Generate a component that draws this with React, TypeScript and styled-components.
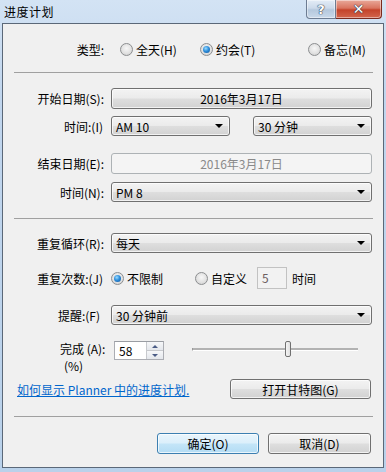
import React from 'react';
import styled, { createGlobalStyle } from 'styled-components';

const GlobalStyle = createGlobalStyle`
  html, body {
    margin: 0;
    padding: 0;
    background: #ffffff;
  }
  body {
    font-family: "Noto Sans CJK SC", "Liberation Sans", sans-serif;
    font-size: 12px;
    color: #000;
  }
`;

const Window = styled.div`
  width: 386px;
  height: 472px;
  display: flex;
  flex-direction: column;
  background: linear-gradient(180deg, #d3e3f4 0%, #c1d6ee 20%, #b9d1ea 100%);
`;

const TitleBar = styled.div`
  height: 23px;
  flex-shrink: 0;
  display: flex;
  align-items: flex-start;
  padding-left: 4px;
`;

const Title = styled.div`
  line-height: 23px;
  font-size: 12px;
  letter-spacing: 0.5px;
`;

const CaptionButtons = styled.div`
  margin-left: auto;
  margin-right: 4px;
  display: flex;
`;

const CaptionButton = styled.div<{ $variant: 'help' | 'close' }>`
  width: ${({ $variant }) => ($variant === 'help' ? '28px' : '45px')};
  height: 18px;
  display: flex;
  align-items: center;
  justify-content: center;
  border: 1px solid ${({ $variant }) => ($variant === 'help' ? '#6d7c92' : '#7a2a1e')};
  border-top: none;
  border-left: ${({ $variant }) => ($variant === 'help' ? '1px solid #6d7c92' : 'none')};
  border-radius: ${({ $variant }) => ($variant === 'help' ? '0 0 0 4px' : '0 0 4px 0')};
  background: ${({ $variant }) =>
    $variant === 'help'
      ? 'linear-gradient(180deg, #e3ecf6 0%, #ccdaea 45%, #b5c8dd 55%, #c9d9ea 100%)'
      : 'linear-gradient(180deg, #e9a99a 0%, #d9745f 45%, #c4432a 55%, #d2664d 100%)'};
  box-shadow: inset 0 0 0 1px rgba(255, 255, 255, 0.45);
  font-family: "DejaVu Sans", sans-serif;
  font-weight: bold;
  font-size: ${({ $variant }) => ($variant === 'help' ? '13px' : '14px')};
  color: #ffffff;
  text-shadow: 0 0 1px #2c3a4e, 0 0 1px #2c3a4e, 0 0 1px #2c3a4e;
`;

const Body = styled.div`
  flex: 1;
  margin: 0 2px 4px 2px;
  border: 1px solid #5b6878;
  background: #f0f0f0;
  display: flex;
  flex-direction: column;
`;

const Row = styled.div<{ $top: number; $h: number }>`
  display: flex;
  align-items: center;
  margin-top: ${({ $top }) => $top}px;
  height: ${({ $h }) => $h}px;
  padding-right: 11px;
  flex-shrink: 0;
`;

const Label = styled.div<{ $inset?: number }>`
  width: 101px;
  flex-shrink: 0;
  text-align: right;
  padding-right: ${({ $inset }) => $inset ?? 0}px;
  box-sizing: border-box;
  margin-right: 7px;
  white-space: nowrap;
`;

const Separator = styled.div<{ $top: number }>`
  height: 1px;
  flex-shrink: 0;
  margin: ${({ $top }) => $top}px 10px 0 11px;
  background: #a0a0a0;
`;

const RadioGroup = styled.div`
  display: flex;
  align-items: center;
  padding-left: 9px;
`;

const RadioItem = styled.label<{ $w?: number }>`
  display: flex;
  align-items: center;
  gap: 3px;
  width: ${({ $w }) => ($w ? `${$w}px` : 'auto')};
  flex-shrink: 0;
  white-space: nowrap;
`;

const RadioCircle = styled.span<{ $checked?: boolean }>`
  width: 13px;
  height: 13px;
  box-sizing: border-box;
  border-radius: 50%;
  border: 1px solid #8c8e90;
  background: radial-gradient(circle at 50% 40%, #f7f7f7 0%, #e2e2e2 55%, #c9c9c9 100%);
  display: flex;
  align-items: center;
  justify-content: center;
  flex-shrink: 0;

  &::after {
    content: '';
    display: ${({ $checked }) => ($checked ? 'block' : 'none')};
    width: 7px;
    height: 7px;
    border-radius: 50%;
    background: radial-gradient(circle at 40% 35%, #9bdcff 0%, #2f8fdc 45%, #0c4f96 100%);
  }
`;

const ComboGroup = styled.div`
  flex: 1;
  display: flex;
  gap: 23px;
  height: 100%;
`;

const Combo = styled.div`
  flex: 1;
  height: 100%;
  box-sizing: border-box;
  border: 1px solid #707070;
  border-radius: 3px;
  background: linear-gradient(180deg, #f3f3f3 0%, #ebebeb 48%, #dedede 52%, #d2d2d2 100%);
  box-shadow: inset 0 0 0 1px rgba(255, 255, 255, 0.7);
  display: flex;
  align-items: center;
  padding: 0 6px 0 4px;
  white-space: nowrap;
`;

const ComboText = styled.span`
  flex: 1;
`;

const Arrow = styled.span`
  width: 0;
  height: 0;
  border-left: 4px solid transparent;
  border-right: 4px solid transparent;
  border-top: 4px solid #000;
`;

const PushButton = styled.button<{ $width?: number; $default?: boolean; $disabled?: boolean }>`
  ${({ $width }) => ($width ? `width: ${$width}px;` : 'flex: 1;')}
  height: 100%;
  box-sizing: border-box;
  font: inherit;
  color: ${({ $disabled }) => ($disabled ? '#8a8a8a' : '#000')};
  border: 1px solid ${({ $default, $disabled }) => ($default ? '#3c7fb1' : $disabled ? '#adb2b5' : '#707070')};
  border-radius: 3px;
  padding: 0;
  background: ${({ $default, $disabled }) =>
    $disabled
      ? '#f4f4f4'
      : $default
      ? 'linear-gradient(180deg, #e9f5fc 0%, #dbeffb 48%, #c4e5f8 52%, #b3dcf4 100%)'
      : 'linear-gradient(180deg, #f3f3f3 0%, #ebebeb 48%, #dedede 52%, #d2d2d2 100%)'};
  box-shadow: ${({ $disabled }) => ($disabled ? 'none' : 'inset 0 0 0 1px rgba(255, 255, 255, 0.7)')};
  white-space: nowrap;
`;

const SmallInput = styled.div`
  width: 30px;
  height: 22px;
  box-sizing: border-box;
  margin-left: 10px;
  border: 1px solid #c2c2c2;
  background: #f2f2f2;
  color: #6d5f5f;
  padding: 2px 0 0 4px;
  line-height: 16px;
`;

const TrailingText = styled.span`
  margin-left: 5px;
`;

const CompletionRow = styled.div`
  display: flex;
  align-items: flex-start;
  margin-top: 16px;
  height: 30px;
  flex-shrink: 0;
`;

const CompletionLabel = styled.div`
  width: 51px;
  margin: -1px 0 0 57px;
  line-height: 17px;
  white-space: nowrap;
`;

const LabelLine = styled.div<{ $indent?: number }>`
  padding-left: ${({ $indent }) => $indent ?? 0}px;
`;

const SpinBox = styled.div`
  width: 50px;
  height: 19px;
  box-sizing: border-box;
  border: 1px solid #abadb3;
  border-top-color: #9a9da3;
  background: #fff;
  display: flex;
  margin-left: 3px;
`;

const SpinValue = styled.div`
  flex: 1;
  padding-left: 4px;
  line-height: 17px;
`;

const SpinButtons = styled.div`
  width: 16px;
  display: flex;
  flex-direction: column;
  border-left: 1px solid #c7c9cd;
`;

const SpinButton = styled.div<{ $up?: boolean }>`
  flex: 1;
  display: flex;
  align-items: center;
  justify-content: center;
  background: linear-gradient(180deg, #f6f7f9 0%, #e4e7ec 100%);
  border-bottom: ${({ $up }) => ($up ? '1px solid #c7c9cd' : 'none')};

  &::after {
    content: '';
    width: 0;
    height: 0;
    border-left: 3px solid transparent;
    border-right: 3px solid transparent;
    ${({ $up }) => ($up ? 'border-bottom: 3px solid #4a5c86;' : 'border-top: 3px solid #4a5c86;')}
  }
`;

const Slider = styled.div`
  position: relative;
  width: 166px;
  height: 18px;
  margin-left: 28px;
`;

const SliderTrack = styled.div`
  position: absolute;
  left: 0;
  right: 0;
  top: 7px;
  height: 2px;
  background: #b2b2b2;
  border-bottom: 1px solid #ffffff;
  border-left: 1px solid #9a9a9a;
`;

const SliderThumb = styled.div`
  position: absolute;
  top: 0;
  width: 6px;
  height: 16px;
  box-sizing: border-box;
  margin-left: -3px;
  border: 1px solid #707070;
  border-radius: 2px;
  background: linear-gradient(90deg, #f4f4f4 0%, #e0e0e0 100%);
`;

const LinkRow = styled.div`
  display: flex;
  align-items: center;
  justify-content: space-between;
  margin-top: 8px;
  height: 20px;
  padding: 0 12px 0 14px;
  flex-shrink: 0;
`;

const HelpLink = styled.a`
  color: #0066cc;
  text-decoration: underline;
  white-space: nowrap;
`;

const ButtonRow = styled.div`
  display: flex;
  justify-content: flex-end;
  gap: 9px;
  margin-top: 16px;
  height: 21px;
  padding-right: 12px;
  flex-shrink: 0;
`;

const percent = 58;

export default function App() {
  return (
    <>
      <GlobalStyle />
      <Window>
        <TitleBar>
          <Title>进度计划</Title>
          <CaptionButtons>
            <CaptionButton $variant="help">?</CaptionButton>
            <CaptionButton $variant="close">✕</CaptionButton>
          </CaptionButtons>
        </TitleBar>
        <Body>
          <Row $top={15} $h={20}>
            <Label $inset={-1}>类型:</Label>
            <RadioGroup>
              <RadioItem $w={80}>
                <RadioCircle />
                全天(H)
              </RadioItem>
              <RadioItem $w={108}>
                <RadioCircle $checked />
                约会(T)
              </RadioItem>
              <RadioItem>
                <RadioCircle />
                备忘(M)
              </RadioItem>
            </RadioGroup>
          </Row>
          <Separator $top={13} />

          <Row $top={15} $h={21}>
            <Label>开始日期(S):</Label>
            <PushButton>2016年3月17日</PushButton>
          </Row>
          <Row $top={7} $h={20}>
            <Label $inset={1}>时间:(I)</Label>
            <ComboGroup>
              <Combo>
                <ComboText>AM 10</ComboText>
                <Arrow />
              </Combo>
              <Combo>
                <ComboText>30 分钟</ComboText>
                <Arrow />
              </Combo>
            </ComboGroup>
          </Row>
          <Row $top={17} $h={21}>
            <Label>结束日期(E):</Label>
            <PushButton $disabled>2016年3月17日</PushButton>
          </Row>
          <Row $top={8} $h={20}>
            <Label>时间(N):</Label>
            <Combo>
              <ComboText>PM 8</ComboText>
              <Arrow />
            </Combo>
          </Row>
          <Separator $top={16} />

          <Row $top={14} $h={20}>
            <Label>重复循环(R):</Label>
            <Combo>
              <ComboText>每天</ComboText>
              <Arrow />
            </Combo>
          </Row>
          <Row $top={14} $h={22}>
            <Label $inset={1}>重复次数:(J)</Label>
            <RadioItem $w={84}>
              <RadioCircle $checked />
              不限制
            </RadioItem>
            <RadioItem>
              <RadioCircle />
              自定义
            </RadioItem>
            <SmallInput>5</SmallInput>
            <TrailingText>时间</TrailingText>
          </Row>
          <Row $top={16} $h={20}>
            <Label $inset={4}>提醒:(F)</Label>
            <Combo>
              <ComboText>30 分钟前</ComboText>
              <Arrow />
            </Combo>
          </Row>

          <CompletionRow>
            <CompletionLabel>
              <LabelLine>完成 (A):</LabelLine>
              <LabelLine $indent={4}>(%)</LabelLine>
            </CompletionLabel>
            <SpinBox>
              <SpinValue>{percent}</SpinValue>
              <SpinButtons>
                <SpinButton $up />
                <SpinButton />
              </SpinButtons>
            </SpinBox>
            <Slider>
              <SliderTrack />
              <SliderThumb style={{ left: `${(percent / 100) * 166}px` }} />
            </Slider>
          </CompletionRow>

          <LinkRow>
            <HelpLink href="#">如何显示 Planner 中的进度计划.</HelpLink>
            <PushButton $width={141}>打开甘特图(G)</PushButton>
          </LinkRow>
          <Separator $top={17} />

          <ButtonRow>
            <PushButton $width={102} $default>
              确定(O)
            </PushButton>
            <PushButton $width={103}>取消(D)</PushButton>
          </ButtonRow>
        </Body>
      </Window>
    </>
  );
}
